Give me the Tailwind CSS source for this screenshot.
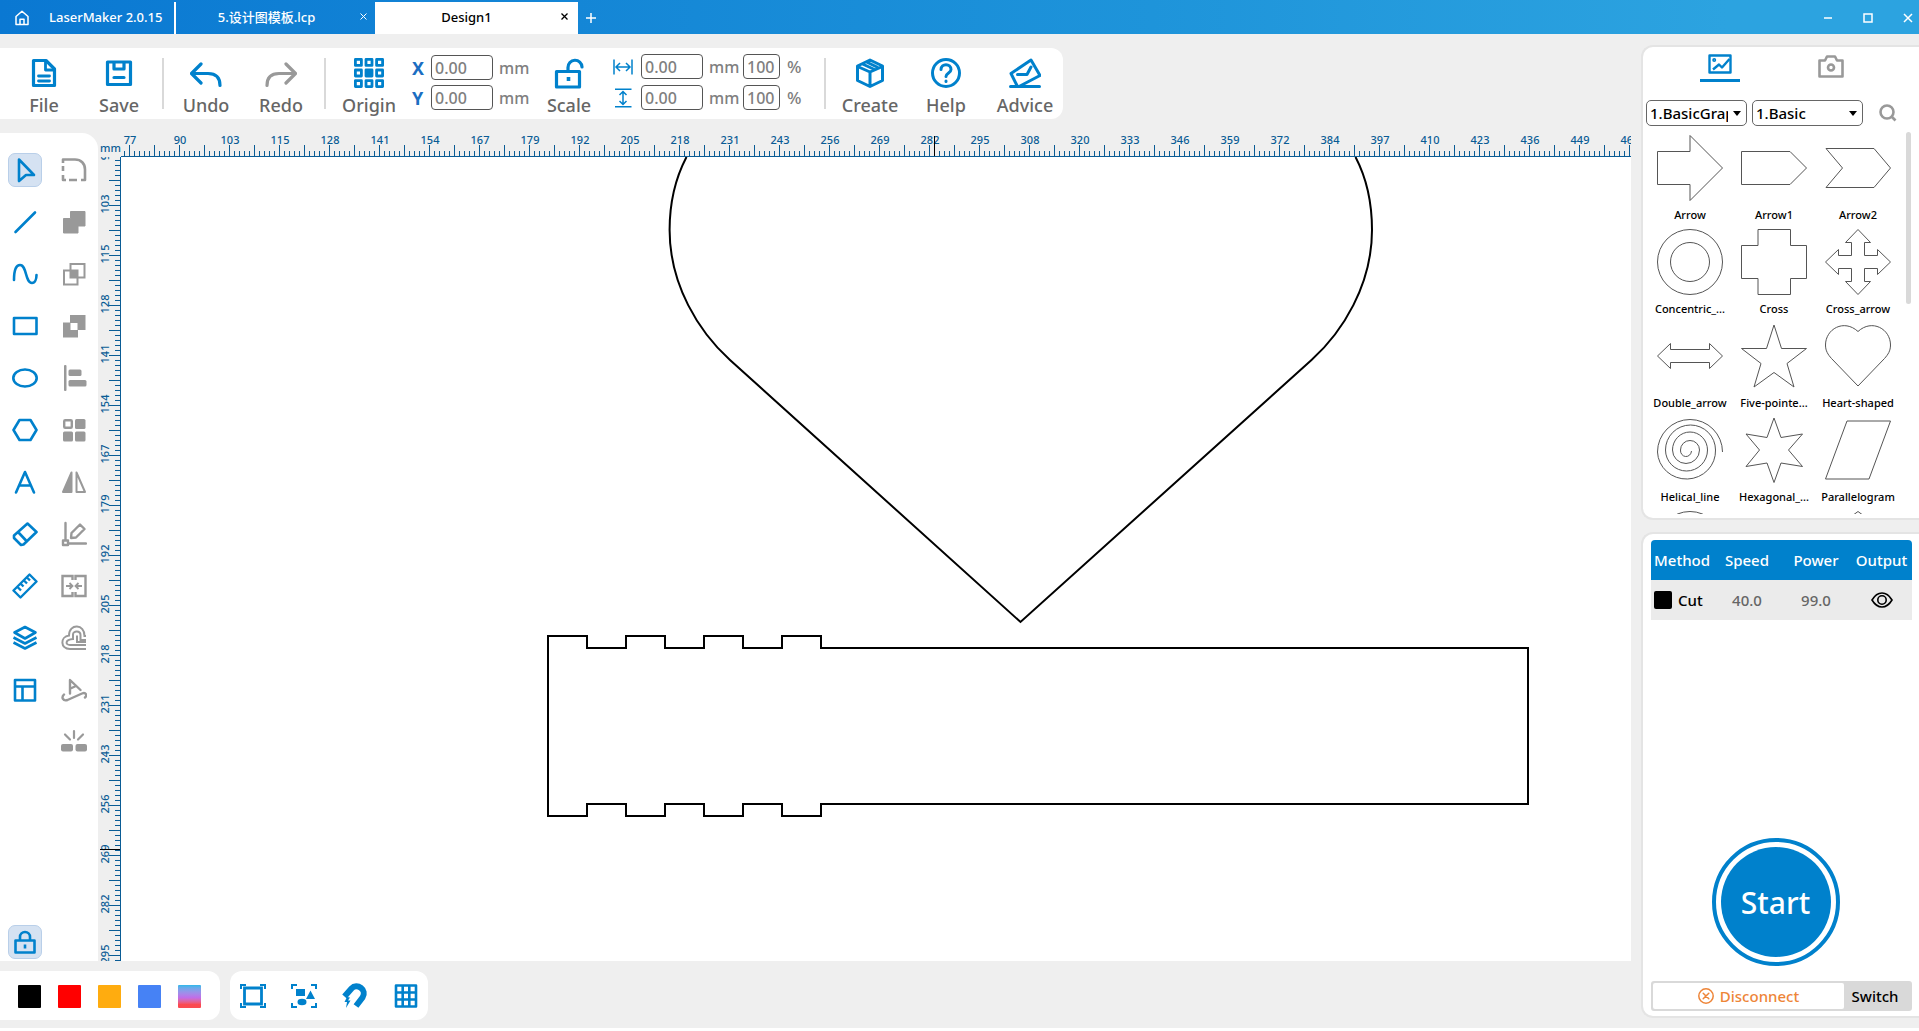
<!DOCTYPE html>
<html lang="en">
<head>
    <meta charset="UTF-8">
    <meta name="viewport" content="width=device-width, initial-scale=1.0">
    <title>LaserMaker 2.0.15</title>

    <!-- Tailwind CSS -->
    <script src="https://cdn.jsdelivr.net/npm/@tailwindcss/browser@4"></script>
</head>
<body class="h-screen flex flex-col overflow-hidden bg-white pb-[3px] font-['Noto_Sans','Noto_Sans_CJK_SC',sans-serif] font-medium text-black">

    <!-- Title bar -->
    <header class="h-[34px] shrink-0 flex items-stretch pt-[2px] text-white text-[13px] bg-linear-to-r from-[#0a78d2] via-[#1e94da] via-60% to-[#2ca3e0] to-90%">
        <button class="w-[176px] flex items-center pl-[14px] gap-[19px] border-r-2 border-white whitespace-nowrap">
            <svg class="size-4" viewBox="0 0 16 16" fill="none" stroke="currentColor" stroke-width="1.5" stroke-linejoin="round"><path d="M2 6.5 8 1.2l6 5.3V14.500H2zM6 14V9.200h4V14"/></svg>
            LaserMaker 2.0.15
        </button>
        <div class="w-[199px] relative flex items-center justify-center pr-[18px]">
            <button>5.设计图模板.lcp</button>
            <button class="absolute right-2 top-[11px]" aria-label="Close tab"><svg class="size-[7px]" viewBox="0 0 7 7" stroke="currentColor"><path d="M.5.5l6 6M6.500.5l-6 6"/></svg></button>
        </div>
        <div class="w-[203px] relative flex items-center justify-center pr-[20px] bg-white text-black">
            <button>Design1</button>
            <button class="absolute right-[10px] top-[11px]" aria-label="Close tab"><svg class="size-[7px]" viewBox="0 0 7 7" stroke="currentColor" stroke-width="1.300"><path d="M.5.5l6 6M6.500.5l-6 6"/></svg></button>
        </div>
        <button class="w-[26px] flex items-center justify-center" aria-label="New tab"><svg class="size-[10px]" viewBox="0 0 10 10" stroke="currentColor" stroke-width="1.500"><path d="M5 0v10M0 5h10"/></svg></button>
        <div class="ml-auto flex items-center gap-[30px] pr-[6px]">
            <button aria-label="Minimize"><svg class="size-[10px]" viewBox="0 0 10 10" stroke="currentColor" stroke-width="1.500"><path d="M1 5h8"/></svg></button>
            <button aria-label="Maximize"><svg class="size-[10px]" viewBox="0 0 10 10" fill="none" stroke="currentColor" stroke-width="1.500"><path d="M1 1h8v8H1z"/></svg></button>
            <button aria-label="Close"><svg class="size-[10px]" viewBox="0 0 10 10" stroke="currentColor" stroke-width="1.500"><path d="M1 1l8 8M9 1 1 9"/></svg></button>
        </div>
    </header>

    <div class="flex-1 min-h-0 flex gap-[10px] bg-[#efefef]">
        <main class="flex-1 min-w-0 flex flex-col pt-[14px]">

            <!-- Main toolbar -->
            <div class="h-[71px] shrink-0 self-start flex items-center rounded-r-xl bg-white pr-[2px] text-[18px] leading-5 text-[#666]">
                <button class="w-[88px] flex flex-col items-center gap-[6px] pt-[5px]">
                    <svg class="size-8 text-[#0081cc]" viewBox="0 0 32 32" fill="none" stroke="currentColor" stroke-width="3.200" stroke-linejoin="round" stroke-linecap="round"><path d="M5.500 3.500H18L26.500 12V28.500H5.500z"/><path d="M17.500 4v9H26M10.500 19h11M10.500 24h11" stroke-width="2.800"/></svg>
                    File
                </button>
                <button class="w-[62px] flex flex-col items-center gap-[6px] pt-[5px]">
                    <svg class="size-8 text-[#0081cc]" viewBox="0 0 32 32" fill="none" stroke="currentColor" stroke-width="3.200" stroke-linejoin="round" stroke-linecap="round"><path d="M4.500 5h23v22.500h-23z"/><path d="M11 5.500v6.500h10V5.500M11 20.500h10"/></svg>
                    Save
                </button>
                <div class="ml-3 w-[2px] h-[51px] bg-[#d9d9d9]"></div>
                <button class="ml-[8px] w-[68px] flex flex-col items-center gap-[6px] pt-[5px]">
                    <svg class="size-8 text-[#0081cc]" viewBox="0 0 32 32" fill="none" stroke="currentColor" stroke-width="3.200" stroke-linejoin="round" stroke-linecap="round"><path d="M11 7 1.500 16.500 11 26M2.500 16.500H18c8 0 12 4 12 12"/></svg>
                    Undo
                </button>
                <button class="ml-[7px] w-[68px] flex flex-col items-center gap-[6px] pt-[5px]">
                    <svg class="size-8 text-[#999]" viewBox="0 0 32 32" fill="none" stroke="currentColor" stroke-width="3.200" stroke-linejoin="round" stroke-linecap="round"><path d="m21 7 9.500 9.500L21 26M29.500 16.500H14c-8 0-12 4-12 12"/></svg>
                    Redo
                </button>
                <div class="ml-[9px] w-[2px] h-[51px] bg-[#d9d9d9]"></div>
                <button class="ml-[9px] w-[68px] flex flex-col items-center gap-[6px] pt-[5px]">
                    <svg class="size-8 text-[#0081cc]" viewBox="0 0 32 32" fill="none" stroke="currentColor" stroke-width="2.800" stroke-linejoin="round"><path d="M2.400 2.400h6v6h-6zM13 2.400h6v6h-6zM23.600 2.400h6v6h-6zM2.400 13h6v6h-6zM23.600 13h6v6h-6zM2.400 23.600h6v6h-6zM13 23.600h6v6h-6zM23.600 23.600h6v6h-6z"/><path d="M13 13h6v6h-6z" fill="currentColor"/></svg>
                    Origin
                </button>
                <div class="ml-[9px] flex flex-col gap-[5px] pb-[2px] text-[16px] text-[#808080]">
                    <div class="flex items-center"><label for="posX" class="w-[19px] text-[18px] font-bold text-[#1b6ec2]">X</label><input id="posX" value="0.00" class="w-[62px] h-[25px] rounded-[4px] border border-[#555] px-[3px]"><span class="w-[33px] pl-[6px]">mm</span></div>
                    <div class="flex items-center"><label for="posY" class="w-[19px] text-[18px] font-bold text-[#1b6ec2]">Y</label><input id="posY" value="0.00" class="w-[62px] h-[25px] rounded-[4px] border border-[#555] px-[3px]"><span class="w-[33px] pl-[6px]">mm</span></div>
                </div>
                <button class="ml-[9px] w-[68px] flex flex-col items-center gap-[6px] pt-[5px]">
                    <svg class="size-8 text-[#0081cc]" viewBox="0 0 32 32" fill="none" stroke="currentColor" stroke-width="3.200" stroke-linejoin="round"><path d="M3.500 14.500h23v15.500h-23z"/><path d="M15 14V10.500a6.500 6.500 0 0 1 14-.5" stroke-linecap="round"/><path d="M15.500 20v4" stroke-width="3.600"/></svg>
                    Scale
                </button>
                <div class="ml-[10px] flex flex-col gap-[6px] pb-[3px] text-[16px] text-[#808080]">
                    <div class="flex items-center"><svg class="mr-[8px] size-5 text-[#0081cc]" viewBox="0 0 20 20" fill="none" stroke="currentColor" stroke-width="1.500"><path d="M1 2.500v15M19 2.500v15M3.500 10h13M7 6l-4 4 4 4M13 6l4 4-4 4"/></svg><input aria-label="Width" value="0.00" class="w-[62px] h-[25px] rounded-[4px] border border-[#555] px-[3px]"><span class="w-[40px] pl-[6px]">mm</span><input aria-label="Width percent" value="100" class="w-[37px] h-[25px] rounded-[4px] border border-[#555] px-[3px]"><span class="w-[24px] pl-[7px] text-[17px]">%</span></div>
                    <div class="flex items-center"><svg class="mr-[8px] size-5 text-[#0081cc]" viewBox="0 0 20 20" fill="none" stroke="currentColor" stroke-width="1.500"><path d="M2 1.200h16.500M2 18.800h16.500M10 3.500v13M6.500 7 10 3.500 13.500 7M6.500 13l3.500 3.500L13.500 13"/></svg><input aria-label="Height" value="0.00" class="w-[62px] h-[25px] rounded-[4px] border border-[#555] px-[3px]"><span class="w-[40px] pl-[6px]">mm</span><input aria-label="Height percent" value="100" class="w-[37px] h-[25px] rounded-[4px] border border-[#555] px-[3px]"><span class="w-[24px] pl-[7px] text-[17px]">%</span></div>
                </div>
                <div class="ml-[20px] w-[2px] h-[51px] bg-[#d9d9d9]"></div>
                <button class="ml-[10px] w-[68px] flex flex-col items-center gap-[6px] pt-[5px]">
                    <svg class="size-8 text-[#0081cc]" viewBox="0 0 32 32" fill="none" stroke="currentColor" stroke-width="3" stroke-linejoin="round"><path d="M16 3 28.500 9v14.500L16 29.500 3.500 23.500V9zM3.500 9.500 16 15l12.500-5.500M16 15v14M8.500 7 20.500 12.500M12.500 5 24 10.500"/></svg>
                    Create
                </button>
                <button class="ml-[8px] w-[68px] flex flex-col items-center gap-[6px] pt-[5px]">
                    <svg class="size-8 text-[#0081cc]" viewBox="0 0 32 32" fill="none" stroke="currentColor" stroke-width="3" stroke-linecap="round"><circle cx="16" cy="16" r="13.500"/><path d="M11 12.500c0-6.500 10-6.500 10 0 0 3.500-5 3.300-5 7M16 24v.5"/></svg>
                    Help
                </button>
                <button class="ml-[9px] w-[72px] flex flex-col items-center gap-[6px] pt-[5px]">
                    <svg class="size-8 text-[#0081cc]" viewBox="0 0 32 32" fill="none" stroke="currentColor" stroke-width="3" stroke-linejoin="round" stroke-linecap="round"><path d="M1.500 29.500h29M8 28.500 2 16.500 22 3l9 15.500-20 10.500M8.500 17.500h9.500L22 10"/></svg>
                    Advice
                </button>
            </div>

            <!-- Workspace -->
            <div class="mt-[14px] flex-1 min-h-0 flex">
                <div class="w-[98px] shrink-0 flex items-start rounded-tr-2xl bg-white pt-5 pl-2">
                    <div class="self-stretch w-[34px] flex flex-col gap-[18px] pb-[2px] text-[#0081cc]">
                        <button class="size-[34px] grid place-items-center rounded-[7px] border border-[#b9cfe9] bg-[#d5e2f2]" aria-label="Select"><svg class="size-[26px]" viewBox="0 0 26 26" fill="none" stroke="currentColor" stroke-width="2.600" stroke-linejoin="round"><path d="M7 2.500 22 18H14L7 24z"/></svg></button>
                        <button class="size-[34px] grid place-items-center" aria-label="Line"><svg class="size-[26px]" viewBox="0 0 26 26" fill="none" stroke="currentColor" stroke-width="2.600" stroke-linecap="round"><path d="M3.500 23 23 3.500"/></svg></button>
                        <button class="size-[34px] grid place-items-center" aria-label="Curve"><svg class="size-[26px]" viewBox="0 0 26 26" fill="none" stroke="currentColor" stroke-width="2.600" stroke-linecap="round"><path d="M2 19C2 9 4 4 8 4c7 0 5 18 12 18 3 0 4.500-4 4.500-8"/></svg></button>
                        <button class="size-[34px] grid place-items-center" aria-label="Rectangle"><svg class="size-[26px]" viewBox="0 0 26 26" fill="none" stroke="currentColor" stroke-width="2.600" stroke-linejoin="round"><path d="M2 5h22.500v16H2z"/></svg></button>
                        <button class="size-[34px] grid place-items-center" aria-label="Ellipse"><svg class="size-[26px]" viewBox="0 0 26 26" fill="none" stroke="currentColor" stroke-width="2.600"><ellipse cx="13" cy="13" rx="11.700" ry="8.500"/></svg></button>
                        <button class="size-[34px] grid place-items-center" aria-label="Polygon"><svg class="size-[26px]" viewBox="0 0 26 26" fill="none" stroke="currentColor" stroke-width="2.600" stroke-linejoin="round"><path d="M7.500 3h11L24.500 13l-6 10h-11L1.500 13z"/></svg></button>
                        <button class="size-[34px] grid place-items-center" aria-label="Text"><svg class="size-[26px]" viewBox="0 0 26 26" fill="none" stroke="currentColor" stroke-width="2.600" stroke-linejoin="round" stroke-linecap="round"><path d="M4 23.500 13 3l9 20.500M7.500 16.500h11"/></svg></button>
                        <button class="size-[34px] grid place-items-center" aria-label="Eraser"><svg class="size-[26px]" viewBox="0 0 26 26" fill="none" stroke="currentColor" stroke-width="2.600" stroke-linejoin="round"><path d="M15.500 2.500 24.500 11 11.500 23.500 9 24 2 17v-2.500zM6.500 11.500 14.500 20"/></svg></button>
                        <button class="size-[34px] grid place-items-center" aria-label="Ruler"><svg class="size-[26px]" viewBox="0 0 26 26" fill="none" stroke="currentColor" stroke-width="2.400" stroke-linejoin="round"><path d="M17.500 1.500 24.500 8.500 8.500 24.500 1.500 17.500zM5.500 14l3.500 3.500M8.500 10.500l3 3M12 7.500l3 3M15 4.500l3 3"/></svg></button>
                        <button class="size-[34px] grid place-items-center" aria-label="Layers"><svg class="size-[26px]" viewBox="0 0 26 26" fill="none" stroke="currentColor" stroke-width="2.600" stroke-linejoin="round"><path d="M13 2 23.500 7.500 13 13.500 2.500 7.500zM1.500 12.500 13 18.500 24.500 12.500M1.500 17.500 13 23.500 24.500 17.500"/></svg></button>
                        <button class="size-[34px] grid place-items-center" aria-label="Layout"><svg class="size-[26px]" viewBox="0 0 26 26" fill="none" stroke="currentColor" stroke-width="2.600" stroke-linejoin="round"><path d="M3 3h20v20.500H3zM3 9.500h20M10.500 9.500V23"/></svg></button>
                        <button class="mt-auto size-[34px] grid place-items-center rounded-[7px] border border-[#b9cfe9] bg-[#d5e2f2]" aria-label="Lock"><svg class="size-[26px]" viewBox="0 0 26 26" fill="none" stroke="currentColor" stroke-width="2.600" stroke-linejoin="round"><path d="M3.500 11.500h19V23.500h-19zM8 11V8a5 5 0 0 1 10 0v3M13 15.500v4"/></svg></button>
                    </div>
                    <div class="ml-[15px] w-[34px] flex flex-col gap-[18px] text-[#999]">
                        <button class="size-[34px] grid place-items-center" aria-label="Fillet"><svg class="size-[26px]" viewBox="0 0 26 26" fill="none" stroke="currentColor" stroke-width="2.600" stroke-linejoin="round"><path d="M2 6V2.500h12c6 0 10 4 10 10V23h-4M2 9v5M2 18v5h3M8 23h8"/></svg></button>
                        <button class="size-[34px] grid place-items-center" aria-label="Union"><svg class="size-[26px]" viewBox="0 0 26 26" fill="currentColor" stroke="currentColor" stroke-linejoin="round"><path d="M9.500 2.500h14.500V17H17v7H2.500V9.500h7z"/></svg></button>
                        <button class="size-[34px] grid place-items-center" aria-label="Intersect"><svg class="size-[26px]" viewBox="0 0 26 26" fill="none" stroke="currentColor" stroke-width="2"><path d="M9.500 3H23.500V16.500H9.500zM3 9.500H16.500V23.500H3z"/><path d="M10 10h6v6h-6z" fill="currentColor"/></svg></button>
                        <button class="size-[34px] grid place-items-center" aria-label="Subtract"><svg class="size-[26px]" viewBox="0 0 26 26" fill="currentColor" fill-rule="evenodd"><path d="M9 2h15.500v15H17v7.500H2V9.500h7zM9.500 10v7H16.500V10z"/></svg></button>
                        <button class="size-[34px] grid place-items-center" aria-label="Align"><svg class="size-[26px]" viewBox="0 0 26 26" fill="currentColor"><rect x="3" y="0" width="2.500" height="26" rx="1"/><rect x="7.500" y="4.500" width="13" height="6.500" rx="1.500"/><rect x="7.500" y="15" width="18" height="6.500" rx="1.500"/></svg></button>
                        <button class="size-[34px] grid place-items-center" aria-label="Array"><svg class="size-[26px]" viewBox="0 0 26 26" fill="currentColor"><rect x="3.200" y="3.200" width="7.600" height="7.600" rx="1" fill="none" stroke="currentColor" stroke-width="2.400"/><rect x="14" y="2" width="10.500" height="10" rx="1.500"/><rect x="2" y="14.500" width="10" height="10" rx="1.500"/><rect x="14" y="14.500" width="10.500" height="10" rx="1.500"/></svg></button>
                        <button class="size-[34px] grid place-items-center" aria-label="Mirror"><svg class="size-[26px]" viewBox="0 0 26 26" fill="none" stroke="currentColor" stroke-width="2" stroke-linejoin="round"><path d="M10.500 3.500V23H2z" fill="currentColor"/><path d="M15.500 3.500V23H24z"/></svg></button>
                        <button class="size-[34px] grid place-items-center" aria-label="Node edit"><svg class="size-[26px]" viewBox="0 0 26 26" fill="none" stroke="currentColor" stroke-width="2.400" stroke-linejoin="round" stroke-linecap="round"><path d="M4.500 2v17M2 19.500h5v4.500H2zM7 22.500h18M10 17l.5-5L19 3.500 23.500 8 15 16.500z"/></svg></button>
                        <button class="size-[34px] grid place-items-center" aria-label="Merge"><svg class="size-[26px]" viewBox="0 0 26 26" fill="none" stroke="currentColor" stroke-width="2.400"><path d="M11.500 7V3H1.500v20h10v-4M14.500 7V3h10v20h-10v-4"/><path d="M5 13h6M8.500 10l3 3-3 3M21 13h-6M17.500 10l-3 3 3 3" stroke-width="1.800"/></svg></button>
                        <button class="size-[34px] grid place-items-center" aria-label="Offset"><svg class="size-[26px]" viewBox="0 0 26 26" fill="none" stroke="currentColor" stroke-width="2"><path d="M25 24H9C-1 24-1 11.500 8 10.500 8-2 24-1 23.500 11H25M25 20H9C4 20 4 14.500 12 14V9.500c0-4 7.500-4 7.500.5v5H25M25 17h-9v-6.500"/></svg></button>
                        <button class="size-[34px] grid place-items-center" aria-label="Text on path"><svg class="size-[26px]" viewBox="0 0 26 26" fill="none" stroke="currentColor" stroke-width="2.400" stroke-linecap="round" stroke-linejoin="round"><path d="M9 16.500V3L19.500 13M9.500 11.500 15 9M3 17.500c-3 3-1 7 3.500 5.500L21 16.500c4-1.500 5.500 2 3 4"/></svg></button>
                        <button class="size-[34px] grid place-items-center" aria-label="Explode"><svg class="size-[26px]" viewBox="0 0 26 26" fill="none" stroke="currentColor" stroke-width="2.200" stroke-linecap="round"><path d="M13 2v7M4 5.500l5 5M22 5.500l-5 5"/><g fill="currentColor" stroke="none"><rect x="0" y="15" width="12" height="7.500" rx="2"/><rect x="14.500" y="15" width="11.500" height="7.500" rx="2"/></g></svg></button>
                    </div>
                </div>

                <!-- Vertical ruler -->
                <div class="w-[23px] shrink-0 flex flex-col">
                    <span class="h-6 pt-[7px] pl-[2px] text-[11px] leading-4 text-[#0a5c95] whitespace-nowrap">mm</span>
                    <svg id="rulerY" class="block w-full flex-1 min-h-0 text-[#0a5c95]"></svg>
                </div>

                <div class="flex-1 min-w-0 flex flex-col">
                    <!-- Horizontal ruler -->
                    <svg id="rulerX" class="block w-full h-6 shrink-0 text-[#0a5c95]"></svg>
                    <!-- Drawing area -->
                    <svg class="block w-full flex-1 min-h-0 bg-white" fill="none" stroke="#000" stroke-width="2">
                        <path d="M565.500 0C555 20 548.600 44 548.600 73c0 55 29.400 102 60.400 130L899.500 465 1190.500 203c31-28 60.500-75 60.500-130 0-29-6-53-16.500-73"/>
                        <path d="M427 479h39v12h39v-12h39v12h39v-12h39v12h39v-12h39v12h707v156H700v12h-39v-12h-39v12h-39v-12h-39v12h-39v-12h-39v12h-39z"/>
                    </svg>
                </div>
            </div>

            <!-- Bottom bar -->
            <div class="h-[67px] shrink-0 flex items-start gap-[10px] pt-[10px]">
                <div class="w-[220px] h-[49px] flex items-center gap-[17px] rounded-r-xl bg-white pl-[18px] pt-[2px]">
                    <button class="size-[23px] rounded-[1px] bg-black" aria-label="Black layer"></button>
                    <button class="size-[23px] rounded-[1px] bg-[#ff0000]" aria-label="Red layer"></button>
                    <button class="size-[23px] rounded-[1px] bg-[#ffac0f]" aria-label="Orange layer"></button>
                    <button class="size-[23px] rounded-[1px] bg-[#4682f5]" aria-label="Blue layer"></button>
                    <button class="size-[23px] rounded-[1px] bg-linear-to-b from-[#27b8ea] via-[#c06de8] via-55% to-[#fb4a50] to-85%" aria-label="Engrave layer"></button>
                </div>
                <div class="w-[198px] h-[49px] flex items-center gap-[25px] rounded-xl bg-white pl-[10px] text-[#0081cc]">
                    <button aria-label="Fit frame"><svg class="size-[26px]" viewBox="0 0 26 26" fill="none" stroke="currentColor" stroke-width="2.800"><path d="M4.500 5h17v16h-17z"/><path d="M1 6V2h5M20 2h5v4M1 20v4h5M20 24h5v-4" stroke-width="2"/></svg></button>
                    <button aria-label="Fit shapes"><svg class="size-[26px]" viewBox="0 0 26 26" fill="currentColor"><path d="M1 6V2h5M20 2h5v4M1 20v4h5M20 24h5v-4" fill="none" stroke="currentColor" stroke-width="2"/><path d="M5 6h9v7H5zM19.500 7.500 24 16H15z"/><ellipse cx="11" cy="19" rx="4.500" ry="3.200"/></svg></button>
                    <button aria-label="Snap"><svg class="size-[26px]" viewBox="0 0 26 26" fill="none" stroke="currentColor" stroke-width="6"><path d="M2.500 13.500 9.500 5.500C15-.5 25.500 7 20.500 14.500L14 23"/><path d="M5 14 2.500 19H5l-1 6 4.500-7.500H6L8 14.500z" fill="currentColor" stroke="none"/></svg></button>
                    <button aria-label="Grid"><svg class="size-[26px]" viewBox="0 0 26 26" fill="none" stroke="currentColor" stroke-width="2.600" stroke-linejoin="round"><path d="M3 2.500h20v21H3zM3 9.500h20M3 16.500h20M9.700 2.500v21M16.300 2.500v21"/></svg></button>
                </div>
            </div>
        </main>

        <!-- Right side panels -->
        <aside class="w-[278px] shrink-0 flex flex-col gap-3 pt-[11px] pb-[10px]">

            <!-- Graphics library -->
            <section class="h-[475px] shrink-0 flex flex-col overflow-hidden rounded-l-xl border-2 border-r-0 border-[#e4e4e4] bg-white">
                <div class="flex h-[40px]">
                    <button class="ml-[57px] w-10 h-[35px] flex flex-col items-center justify-end border-b-3 border-[#0081cc] pb-[5px] text-[#0081cc]" aria-label="Graphics"><svg class="w-6 h-5" viewBox="0 0 24 20" fill="none" stroke="currentColor" stroke-width="2.400" stroke-linejoin="round"><path d="M1.500 1.500h21v17h-21z"/><path d="M5 15.500l6-5 3 3 7.500-8.500"/><circle cx="6.200" cy="6" r=".8"/></svg></button>
                    <button class="ml-[78px] mt-[7px] h-[24px] text-[#999]" aria-label="Camera"><svg class="w-[26px] h-[23px]" viewBox="0 0 26 23" fill="none" stroke="currentColor" stroke-width="2.600" stroke-linejoin="round"><path d="M1.500 5.500h5.500L9 1.500h8l2 4h5.500v16h-23z"/><circle cx="13" cy="12.500" r="3"/></svg></button>
                </div>
                <div class="mt-[13px] ml-[3px] flex items-center text-[16px]">
                    <div class="relative w-[101px]">
                        <select aria-label="Library" class="w-full h-[26px] appearance-none rounded-[5px] border border-[#666] pl-[3px] pr-[18px] text-[15px] overflow-hidden"><option>1.BasicGraphics</option></select>
                        <svg class="pointer-events-none absolute right-[6px] top-[11px] w-2 h-[5px]" viewBox="0 0 8 5"><path d="M0 0h8L4 5z"/></svg>
                    </div>
                    <div class="relative ml-[5px] w-[111px]">
                        <select aria-label="Category" class="w-full h-[26px] appearance-none rounded-[5px] border border-[#666] pl-[3px] pr-[18px] text-[15px]"><option>1.Basic</option></select>
                        <svg class="pointer-events-none absolute right-[6px] top-[11px] w-2 h-[5px]" viewBox="0 0 8 5"><path d="M0 0h8L4 5z"/></svg>
                    </div>
                    <button class="ml-[16px] text-[#999]" aria-label="Search"><svg class="size-[18px]" viewBox="0 0 18 18" fill="none" stroke="currentColor" stroke-width="2.600"><circle cx="8" cy="8" r="6.500"/><path d="M12.500 12.500l4 4"/></svg></button>
                </div>

                <div class="mt-[6px] flex h-[382px] mb-[3px] overflow-hidden">
                    <div class="ml-[5px] w-[252px] shrink-0 grid grid-cols-3 auto-rows-[94px] content-start pt-[3px] text-[11px] leading-4">
                        <button class="flex flex-col items-center gap-[6px]"><svg class="size-[66px]" viewBox="0 0 66 66" fill="none" stroke="#555"><path d="M.5 16.500H33V.5L65.500 33 33 65.500V49.500H.5z"/></svg>Arrow</button>
                        <button class="flex flex-col items-center gap-[6px]"><svg class="size-[66px]" viewBox="0 0 66 66" fill="none" stroke="#555"><path d="M.5 16.500H49L65.500 33 49 49.500H.5z"/></svg>Arrow1</button>
                        <button class="flex flex-col items-center gap-[6px]"><svg class="size-[66px]" viewBox="0 0 66 66" fill="none" stroke="#555"><path d="M1 13.500H49L65.500 33 49 52.500H1L17.500 33z"/></svg>Arrow2</button>
                        <button class="flex flex-col items-center gap-[6px]"><svg class="size-[66px]" viewBox="0 0 66 66" fill="none" stroke="#555"><circle cx="33" cy="33" r="32.500"/><circle cx="33" cy="33" r="19.500"/></svg>Concentric_...</button>
                        <button class="flex flex-col items-center gap-[6px]"><svg class="size-[66px]" viewBox="0 0 66 66" fill="none" stroke="#555"><path d="M17 .5H49.500V16.500H65.500V49.500H49.500V65.500H17V49.500H.5V16.500H17z"/></svg>Cross</button>
                        <button class="flex flex-col items-center gap-[6px]"><svg class="size-[66px]" viewBox="0 0 66 66" fill="none" stroke="#555"><path d="M33 .5 45.500 13.500H39.500V26.500H52.500V20.500L65.500 33 52.500 45.500V39.500H39.500V52.500H45.500L33 65.500 20.500 52.500H26.500V39.500H13.500V45.500L.5 33 13.500 20.500V26.500H26.500V13.500H20.500z"/></svg>Cross_arrow</button>
                        <button class="flex flex-col items-center gap-[6px]"><svg class="size-[66px]" viewBox="0 0 66 66" fill="none" stroke="#555"><path d="M.5 33 13.500 20.500V26.500H52.500V20.500L65.500 33 52.500 45.500V39.500H13.500V45.500z"/></svg>Double_arrow</button>
                        <button class="flex flex-col items-center gap-[6px]"><svg class="size-[66px]" viewBox="0 0 66 66" fill="none" stroke="#555"><path d="M33 2 40.500 25.500H65.500L46 40.500 53 64 33 49.500 13 64 20 40.500.5 25.500H25.500z"/></svg>Five-pointe...</button>
                        <button class="flex flex-col items-center gap-[6px]"><svg class="size-[66px]" viewBox="0 0 66 66" fill="none" stroke="#555"><path d="M33 8.500C19-4.500 .5 6 .5 22c0 6 2.500 9.500 6 13.500L33 63 59.500 35.500c3.500-4 6-7.500 6-13.500C65.500 6 47-4.500 33 8.500z"/></svg>Heart-shaped</button>
                        <button class="flex flex-col items-center gap-[6px]"><svg class="size-[66px]" viewBox="0 0 66 66" fill="none" stroke="#555"><path d="M65.500 35A32.500 32.500 0 0 0 .5 35 29 28 0 0 0 58.500 33 25 25 0 0 0 8.500 33 21 21 0 0 0 50.500 33 17.500 18 0 0 0 15.500 33 13.500 13.500 0 0 0 42.500 33 9.500 9.500 0 0 0 23.500 33 5.500 6 0 0 0 34.500 34"/></svg>Helical_line</button>
                        <button class="flex flex-col items-center gap-[6px]"><svg class="size-[66px]" viewBox="0 0 66 66" fill="none" stroke="#555"><path d="M33 1 40 20.500 61.500 17 47.500 33 61.500 49.500 40 46 33 65.500 26 46 5 49.500 18.500 33 5 17 26 20.500z"/></svg>Hexagonal_...</button>
                        <button class="flex flex-col items-center gap-[6px]"><svg class="size-[66px]" viewBox="0 0 66 66" fill="none" stroke="#555"><path d="M22 4H65.500L44 62H.5z"/></svg>Parallelogram</button>
                        <button class="flex flex-col items-center" aria-label="Circle"><svg class="size-[66px]" viewBox="0 0 66 66" fill="none" stroke="#555"><circle cx="33" cy="33" r="32.500"/></svg></button>
                        <span></span>
                        <button class="flex flex-col items-center" aria-label="Pentagon"><svg class="size-[66px]" viewBox="0 0 66 66" fill="none" stroke="#555"><path d="M33 .5 65 24 53 63H13L1 24z"/></svg></button>
                    </div>
                    <div class="ml-[6px] w-[5px] h-[172px] rounded-full bg-[#d9d9d9]"></div>
                </div>
            </section>

            <!-- Process settings -->
            <section class="flex-1 min-h-0 flex flex-col items-start rounded-l-xl border-2 border-r-0 border-[#e4e4e4] bg-white pl-[8px] pr-[7px] pt-[6px] pb-[5px]">
                <table class="w-full overflow-hidden rounded-t-[4px] text-[15px]">
                    <thead>
                        <tr class="h-10 bg-[#0081cc] text-white">
                            <th class="w-[62px] font-medium">Method</th>
                            <th class="w-[68px] font-medium">Speed</th>
                            <th class="w-[70px] font-medium">Power</th>
                            <th class="font-medium">Output</th>
                        </tr>
                    </thead>
                    <tbody>
                        <tr class="h-10 bg-[#ebebeb] text-center text-[#666]">
                            <td class="text-black"><div class="flex items-center gap-[6px] pl-[3px]"><span class="size-[18px] rounded-[2px] bg-black"></span>Cut</div></td>
                            <td>40.0</td>
                            <td>99.0</td>
                            <td><button class="block mx-auto text-black" aria-label="Toggle output"><svg class="w-[22px] h-4" viewBox="0 0 22 16" fill="none" stroke="currentColor" stroke-width="1.600"><path d="M1 8c5.500-9.300 14.500-9.300 20 0-5.500 9.300-14.500 9.300-20 0z"/><circle cx="11" cy="8" r="4.200"/></svg></button></td>
                        </tr>
                    </tbody>
                </table>
                <button class="mt-auto mr-3 self-center size-32 shrink-0 grid place-items-center rounded-full border-4 border-[#0081cc] p-[5px] text-[30px] text-white"><span class="size-full grid place-items-center rounded-full bg-[#0081cc]">Start</span></button>
                <div class="mt-[15px] w-full h-[30px] shrink-0 flex rounded-[3px] border-2 border-[#d9d9d9] bg-[#d9d9d9] text-[15px]">
                    <button class="flex-1 flex items-center justify-center gap-[6px] rounded-[2px] bg-white text-[#ee8538]">
                        <svg class="size-4" viewBox="0 0 16 16" fill="none" stroke="currentColor" stroke-width="1.500" stroke-linecap="round"><circle cx="8" cy="8" r="7.200"/><path d="M5.200 5.200l5.600 5.600M10.800 5.200l-5.600 5.600"/></svg>
                        Disconnect
                    </button>
                    <button class="w-[66px] pr-1">Switch</button>
                </div>
            </section>
        </aside>
    </div>

    <script>
        const marks = [77, 90, 103, 115, 128, 141, 154, 167, 179, 192, 205, 218, 231, 243, 256, 269, 282, 295,
            308, 320, 333, 346, 359, 372, 384, 397, 410, 423, 436, 449, 461];

        // Top ruler: a label every 50px, a long tick every 25px, a short one every 5px
        let rulerX = '<path stroke="currentColor" d="M0 23.5H4000"/>';
        marks.forEach((m, i) => {
            rulerX += `<text x="${9 + i * 50}" y="11" text-anchor="middle" fill="currentColor" class="text-[11px]">${m}</text>`;
        });
        let ticks = '';
        for (let i = 0; i < marks.length * 10; i++) {
            ticks += `M${3.5 + i * 5} ${i % 5 === 1 ? 12 : 18}V23`;
        }
        rulerX += `<path stroke="currentColor" d="${ticks}"/><path stroke="#000" d="M813.5 3V23"/>`;
        document.getElementById('rulerX').innerHTML = rulerX;

        // Left ruler starts at 90, labels turned to read upwards
        let rulerY = '<path stroke="currentColor" d="M22.5 0V4000"/>';
        marks.slice(1, 18).forEach((m, i) => {
            rulerY += `<text transform="translate(11 ${-3 + i * 50}) rotate(-90)" text-anchor="middle" fill="currentColor" class="text-[11px]">${m}</text>`;
        });
        ticks = '';
        for (let i = 0; i < 161; i++) {
            ticks += `M${i % 5 === 4 ? 11 : 17} ${3.5 + i * 5}H22`;
        }
        rulerY += `<path stroke="currentColor" d="${ticks}"/><path stroke="#000" d="M2 692.5H22"/>`;
        document.getElementById('rulerY').innerHTML = rulerY;
    </script>
</body>
</html>
